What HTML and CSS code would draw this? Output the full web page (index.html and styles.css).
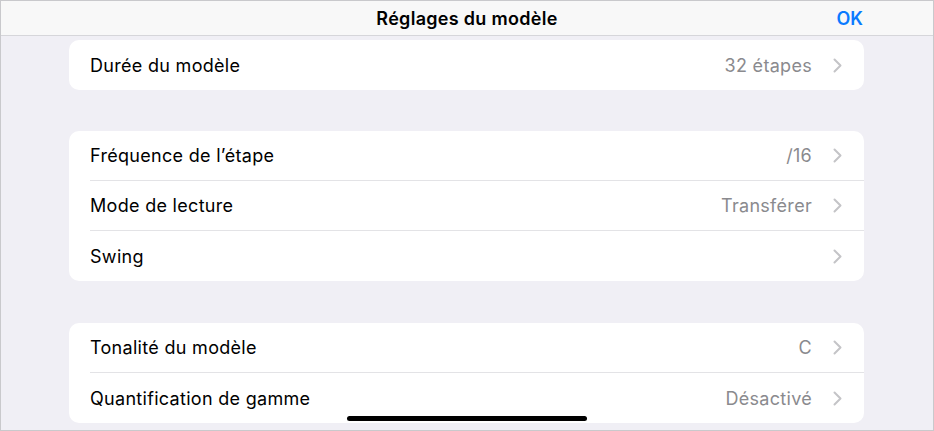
FILE: index.html
```html
<!DOCTYPE html>
<html lang="fr">
<head>
  <meta charset="UTF-8">
  <meta name="viewport" content="width=device-width, initial-scale=1.0">
  <title>Réglages du modèle</title>
  <link rel="stylesheet" href="styles.css">
</head>
<body>
  <div class="screen">
    <header class="nav-bar">
      <h1 class="nav-title">Réglages du modèle</h1>
      <button class="nav-done" type="button">OK</button>
    </header>

    <main class="settings">
      <!-- Longueur -->
      <section class="group">
        <div class="row">
          <span class="row-label">Durée du modèle</span>
          <span class="row-value">32 étapes</span>
          <svg class="chevron" viewBox="0 0 9 15"><path d="M1.5 1.5 L7.5 7.5 L1.5 13.5"/></svg>
        </div>
      </section>

      <!-- Lecture -->
      <section class="group">
        <div class="row">
          <span class="row-label">Fréquence de l’étape</span>
          <span class="row-value">/16</span>
          <svg class="chevron" viewBox="0 0 9 15"><path d="M1.5 1.5 L7.5 7.5 L1.5 13.5"/></svg>
        </div>
        <div class="row">
          <span class="row-label">Mode de lecture</span>
          <span class="row-value">Transférer</span>
          <svg class="chevron" viewBox="0 0 9 15"><path d="M1.5 1.5 L7.5 7.5 L1.5 13.5"/></svg>
        </div>
        <div class="row">
          <span class="row-label">Swing</span>
          <span class="row-value"></span>
          <svg class="chevron" viewBox="0 0 9 15"><path d="M1.5 1.5 L7.5 7.5 L1.5 13.5"/></svg>
        </div>
      </section>

      <!-- Tonalité -->
      <section class="group">
        <div class="row">
          <span class="row-label">Tonalité du modèle</span>
          <span class="row-value">C</span>
          <svg class="chevron" viewBox="0 0 9 15"><path d="M1.5 1.5 L7.5 7.5 L1.5 13.5"/></svg>
        </div>
        <div class="row">
          <span class="row-label">Quantification de gamme</span>
          <span class="row-value">Désactivé</span>
          <svg class="chevron" viewBox="0 0 9 15"><path d="M1.5 1.5 L7.5 7.5 L1.5 13.5"/></svg>
        </div>
      </section>
    </main>

    <div class="home-indicator"></div>
  </div>
</body>
</html>
```

FILE: styles.css
```css
* {
  box-sizing: border-box;
}

body {
  margin: 0;
  padding: 0;
  font-family: Inter, "Liberation Sans", Arial, sans-serif;
  color: #000;
}

.screen {
  position: relative;
  width: 934px;
  height: 431px;
  border: 1px solid #c9c9cc;
  background: #f0eff5;
  overflow: hidden;
  display: flex;
  flex-direction: column;
}

.nav-bar {
  position: relative;
  flex: 0 0 35px;
  display: flex;
  align-items: center;
  justify-content: center;
  background: #f8f8f8;
  border-bottom: 1px solid #d6d6da;
}

.nav-title {
  margin: 0;
  font-size: 18px;
  font-weight: 600;
  letter-spacing: 0.3px;
}

.nav-done {
  position: absolute;
  right: 70px;
  top: 50%;
  transform: translateY(-50%);
  padding: 0;
  border: none;
  background: none;
  color: #0a7aff;
  font-family: inherit;
  font-size: 18px;
  font-weight: 600;
}

.settings {
  padding: 4px 69px 0 68px;
  display: flex;
  flex-direction: column;
  gap: 41px;
}

.group {
  background: #fff;
  border-radius: 10px;
  padding-left: 21px;
}

.group:last-child {
  margin-top: 1px;
}

.row {
  height: 50px;
  display: flex;
  align-items: center;
  padding-right: 22px;
  border-bottom: 1px solid #e3e3e6;
  font-size: 18px;
  letter-spacing: 0.3px;
}

.row:last-child {
  border-bottom: none;
}

.row-label {
  flex: 1;
}

.row-value {
  color: #8a8a8e;
  margin-right: 21px;
}

.chevron {
  width: 9px;
  height: 15px;
  fill: none;
  stroke: #c4c4c7;
  stroke-width: 2;
  stroke-linecap: round;
  stroke-linejoin: round;
}

.home-indicator {
  position: absolute;
  left: 346px;
  top: 415px;
  width: 240px;
  height: 5px;
  border-radius: 3px;
  background: #000;
}
```
